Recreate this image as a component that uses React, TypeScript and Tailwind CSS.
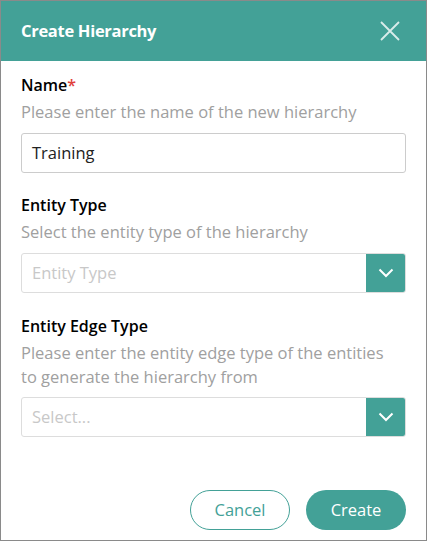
export default function App() {
  const teal = "bg-[#43a197]";
  return (
    <div
      className="flex h-[541px] w-[427px] flex-col border border-[#8a8a8a] bg-white"
      style={{ fontFamily: '"Open Sans", "Noto Sans", sans-serif' }}
    >
      <header className={`flex h-[60px] flex-none items-center justify-between ${teal} pl-[20px] pr-[26px]`}>
        <h1 className="text-[16.5px] font-bold tracking-[-0.3px] text-white">Create Hierarchy</h1>
        <svg width="20" height="20" viewBox="0 0 20 20" className="text-white/80">
          <path d="M1 1L19 19M19 1L1 19" stroke="currentColor" strokeWidth="1.8" />
        </svg>
      </header>
      <main className="flex flex-1 flex-col px-[20px] pt-[13px]">
        <label className="text-[16px] font-semibold leading-[22px] text-black">
          Name<span className="text-[#e0403a]">*</span>
        </label>
        <p className="mt-[5px] text-[16.5px] leading-[22px] text-[#a0a0a0]">
          Please enter the name of the new hierarchy
        </p>
        <div className="mt-[10px] flex h-[40px] items-center rounded-[3px] border border-[#cccccc] px-[10px] text-[16.5px] text-[#222]">
          Training
        </div>

        <label className="mt-[21px] text-[16px] font-semibold leading-[22px] text-black">Entity Type</label>
        <p className="mt-[5px] text-[16.5px] leading-[22px] text-[#a0a0a0]">
          Select the entity type of the hierarchy
        </p>
        <Select placeholder="Entity Type" className="mt-[10px]" />

        <label className="mt-[22px] text-[16px] font-semibold leading-[22px] text-black">Entity Edge Type</label>
        <p className="mt-[4px] max-w-[372px] text-[16.5px] leading-[24px] text-[#a0a0a0]">
          Please enter the entity edge type of the entities to generate the hierarchy from
        </p>
        <Select placeholder="Select..." className="mt-[8px]" />

        <div className="mt-auto mb-[10px] flex justify-end gap-[16px]">
          <button className="h-[40px] w-[100px] rounded-full border border-[#43a197] text-[16.5px] text-[#43a197]">
            Cancel
          </button>
          <button className={`h-[40px] w-[100px] rounded-full ${teal} text-[16.5px] text-white`}>Create</button>
        </div>
      </main>
    </div>
  );
}

function Select({ placeholder, className }: { placeholder: string; className: string }) {
  return (
    <div className={`${className} flex h-[40px] overflow-hidden rounded-[3px] border border-[#dddddd]`}>
      <div className="flex flex-1 items-center px-[10px] text-[16.5px] text-[#c8c8c8]">{placeholder}</div>
      <div className="flex w-[39px] items-center justify-center bg-[#43a197]">
        <svg width="16" height="10" viewBox="0 0 16 10">
          <path d="M1.5 1.5L8 8L14.5 1.5" fill="none" stroke="white" strokeWidth="2" />
        </svg>
      </div>
    </div>
  );
}
